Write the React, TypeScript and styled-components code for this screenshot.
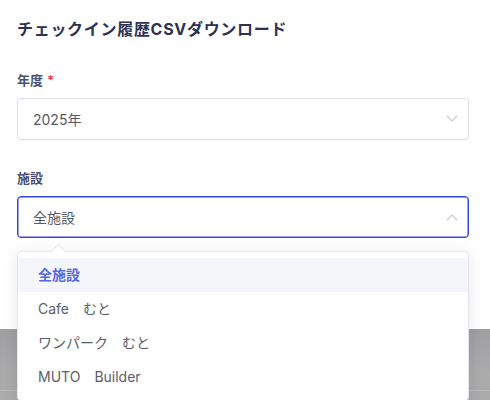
import styled, { createGlobalStyle } from 'styled-components'

const GlobalStyle = createGlobalStyle`
  html, body {
    margin: 0;
    padding: 0;
    background: #ffffff;
    font-family: Inter, "Noto Sans CJK JP", sans-serif;
  }
`

const options = ['全施設', 'Cafe　むと', 'ワンパーク　むと', 'MUTO　Builder']

function Chevron ({ up }: { up?: boolean }) {
  return (
    <svg width='12' height='8' viewBox='0 0 12 8' fill='none'>
      <path d={up ? 'M1 7 L6 2 L11 7' : 'M1 1 L6 6 L11 1'} stroke='#c6c9d2' strokeWidth='1.1' />
    </svg>
  )
}

export default function App () {
  return (
    <>
      <GlobalStyle />
      <Page>
        <Modal>
          <Title>チェックイン履歴CSVダウンロード</Title>
          <Field>
            <Label>年度<Required>*</Required></Label>
            <Select>
              <Value>2025年</Value>
              <Chevron />
            </Select>
          </Field>
          <Field>
            <Label>施設</Label>
            <SelectWrap>
              <Select $active>
                <Value>全施設</Value>
                <Chevron up />
              </Select>
              <Dropdown>
                <Arrow />
                {options.map((option, i) => (
                  <Option key={option} $selected={i === 0}>{option}</Option>
                ))}
              </Dropdown>
            </SelectWrap>
          </Field>
        </Modal>
        <Backdrop>
          <FooterLine />
        </Backdrop>
      </Page>
    </>
  )
}

const Page = styled.div`
  width: 490px;
  height: 400px;
  overflow: hidden;
  display: flex;
  flex-direction: column;
`

const Modal = styled.div`
  height: 329px;
  flex-shrink: 0;
  box-sizing: border-box;
  padding: 17px 21px 0 17px;
  background: #ffffff;
  display: flex;
  flex-direction: column;
  gap: 28px;
  position: relative;
  z-index: 1;
`

const Title = styled.h2`
  margin: 0 0 1px;
  font-size: 16px;
  line-height: 24px;
  font-weight: 700;
  color: #2e3152;
  letter-spacing: 0.7px;
`

const Field = styled.div`
  display: flex;
  flex-direction: column;
  gap: 8px;
`

const Label = styled.label`
  font-size: 13px;
  line-height: 20px;
  font-weight: 700;
  color: #4a5173;
`

const Required = styled.span`
  color: #ef3d5f;
  margin-left: 4px;
`

const SelectWrap = styled.div`
  position: relative;
`

const Select = styled.div<{ $active?: boolean }>`
  height: 42px;
  box-sizing: border-box;
  border: 1px solid ${p => p.$active ? '#2f46e4' : '#dcdde6'};
  ${p => p.$active && 'box-shadow: inset 0 0 0 0.5px #2f46e4;'}
  border-radius: 4px;
  padding: 0 10px 0 15px;
  display: flex;
  align-items: center;
  justify-content: space-between;
  background: #ffffff;
`

const Value = styled.span`
  font-size: 14px;
  color: #555a66;
`

const Dropdown = styled.div`
  position: absolute;
  top: 55px;
  left: 0;
  right: 0;
  background: #ffffff;
  border: 1px solid #e6e8ee;
  border-radius: 4px;
  box-shadow: 0 2px 14px rgba(0, 0, 0, 0.1);
  padding: 6px 0;
`

const Arrow = styled.div`
  position: absolute;
  top: -6px;
  left: 35px;
  width: 10px;
  height: 10px;
  background: #ffffff;
  border-top: 1px solid #e6e8ee;
  border-left: 1px solid #e6e8ee;
  transform: rotate(45deg);
`

const Option = styled.div<{ $selected?: boolean }>`
  position: relative;
  height: 34px;
  line-height: 34px;
  padding: 0 20px;
  font-size: 14px;
  color: ${p => p.$selected ? '#5468e6' : '#5a5e6a'};
  font-weight: ${p => p.$selected ? 700 : 400};
  background: ${p => p.$selected ? '#f5f6fa' : 'transparent'};
`

const Backdrop = styled.div`
  flex: 1;
  background: linear-gradient(#9f9fa2, #aaaaab 60%);
  display: flex;
  flex-direction: column;
  justify-content: flex-end;
  padding-bottom: 9px;
`

const FooterLine = styled.div`
  height: 1px;
  background: #bcbcbe;
`
